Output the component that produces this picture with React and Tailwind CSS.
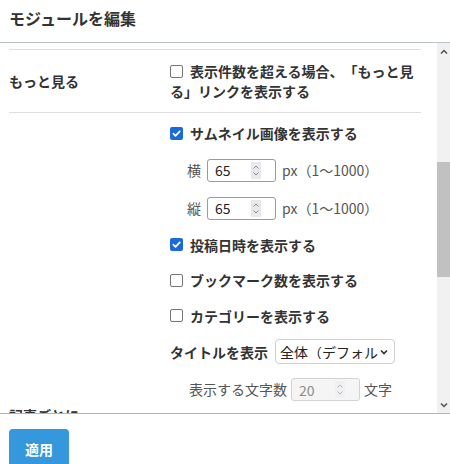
import React from "react";

/* ── small drawn controls ───────────────────────────── */
function Box({ checked }) {
  if (checked) {
    return (
      <span className="inline-flex w-[13px] h-[13px] shrink-0 items-center justify-center rounded-[2px] bg-[#1b6ad8] align-[-1px]">
        <svg width="9" height="9" viewBox="0 0 10 10" fill="none">
          <path d="M1.5 5.2l2.4 2.4L8.6 2.6" stroke="#fff" strokeWidth="1.9" strokeLinecap="round" strokeLinejoin="round" />
        </svg>
      </span>
    );
  }
  return (
    <span className="inline-block w-[13px] h-[13px] shrink-0 rounded-[2px] border border-[#767676] bg-white align-[-1px]" />
  );
}

function Spin({ disabled }) {
  return (
    <span className={`flex w-[10px] h-[17px] flex-col items-center justify-center ${disabled ? "bg-[#f0f0f2]" : "bg-[#e9e9ed]"}`}>
      <svg width="8" height="13" viewBox="0 0 8 13" fill="none" stroke={disabled ? "#b5b5b5" : "#8a8a8a"} strokeWidth="1">
        <path d="M1.5 4.5L4 2l2.5 2.5" />
        <path d="M1.5 8.5L4 11l2.5-2.5" />
      </svg>
    </span>
  );
}

function NumField({ value, disabled }) {
  return (
    <div
      className={`flex h-[23px] w-[69px] items-center justify-between rounded-[3px] border pl-[7px] pr-[14px] ${
        disabled ? "border-[#d3d3d3] bg-[#f5f5f5] text-[#8c8c8c]" : "border-[#9a9a9a] bg-white text-[#222]"
      }`}
    >
      <span className="text-[14px] leading-none">{value}</span>
      <Spin disabled={disabled} />
    </div>
  );
}

function Check({ checked, children }) {
  return (
    <div className="flex items-center gap-[7px]">
      <Box checked={checked} />
      <span className="text-[14px] font-semibold leading-[20px] text-[#333]">{children}</span>
    </div>
  );
}

export default function App() {
  return (
    <div
      className="flex h-[464px] w-[450px] flex-col overflow-hidden bg-white text-[#333] [text-spacing-trim:space-all]"
      style={{ fontFamily: '"Noto Sans CJK JP", "Noto Sans", sans-serif' }}
    >
      {/* header */}
      <div className="flex h-[43px] shrink-0 items-center border-b border-[#bcc3c8] px-[9px] pb-[6px]">
        <h1 className="text-[16px] font-bold leading-none text-[#333]">モジュールを編集</h1>
      </div>

      {/* scroll body */}
      <div className="flex h-[371px] shrink-0 border-b border-[#b4b4b4]">
        <div className="flex-1 overflow-hidden pl-[9px] pr-[16px] pt-[6px]">
          {/* もっと見る */}
          <div className="flex border-y border-[#dedede] py-[11px]">
            <div className="flex w-[161px] shrink-0 items-center text-[14px] font-semibold leading-[20px]">もっと見る</div>
            <p className="flex-1 text-[14px] font-semibold leading-[20px] text-[#333]">
              <span className="mr-[7px] inline-block">
                <Box />
              </span>
              表示件数を超える場合、「もっと見る」リンクを表示する
            </p>
          </div>

          {/* 記事ごとに */}
          <div className="flex">
            <div className="w-[161px] shrink-0 pt-[292px] text-[14px] font-semibold leading-[20px]">記事ごとに</div>
            <div className="flex flex-1 flex-col pt-[2px]">
              <div className="flex h-[36px] items-center">
                <Check checked>サムネイル画像を表示する</Check>
              </div>
              <div className="flex h-[38px] items-center gap-[6px] pl-[17px] text-[14px] text-[#555]">
                <span>横</span>
                <NumField value="65" />
                <span>px（1〜1000）</span>
              </div>
              <div className="flex h-[38px] items-center gap-[6px] pl-[17px] text-[14px] text-[#555]">
                <span>縦</span>
                <NumField value="65" />
                <span>px（1〜1000）</span>
              </div>
              <div className="flex h-[35px] items-center">
                <Check checked>投稿日時を表示する</Check>
              </div>
              <div className="flex h-[36px] items-center">
                <Check>ブックマーク数を表示する</Check>
              </div>
              <div className="flex h-[35px] items-center">
                <Check>カテゴリーを表示する</Check>
              </div>
              <div className="flex h-[37px] items-center gap-[7px]">
                <span className="text-[14px] font-semibold leading-[20px]">タイトルを表示</span>
                <div className="flex h-[25px] w-[120px] items-center justify-between overflow-hidden rounded-[4px] border border-[#cfcfcf] pl-[4px] pr-[5px]">
                  <span className="overflow-hidden whitespace-nowrap text-[14px] leading-none text-[#222]">全体（デフォル</span>
                  <svg width="10" height="10" viewBox="0 0 10 10" fill="none" stroke="#333" strokeWidth="1.6" className="shrink-0">
                    <path d="M2 3.5l3 3 3-3" />
                  </svg>
                </div>
              </div>
              <div className="flex h-[39px] items-center gap-[4px] pl-[19px] text-[14px] text-[#555]">
                <span>表示する文字数</span>
                <NumField value="20" disabled />
                <span>文字</span>
              </div>
            </div>
          </div>
        </div>

        {/* scrollbar */}
        <div className="flex w-[13px] shrink-0 flex-col bg-[#f1f1f1]">
          <div className="flex h-[17px] items-center justify-center">
            <svg width="8" height="6" viewBox="0 0 8 6" fill="none" stroke="#505050" strokeWidth="1.5">
              <path d="M1 4.5l3-3 3 3" />
            </svg>
          </div>
          <div className="h-[102px]" />
          <div className="h-[115px] bg-[#c1c1c1]" />
          <div className="flex-1" />
          <div className="flex h-[17px] items-center justify-center">
            <svg width="8" height="6" viewBox="0 0 8 6" fill="none" stroke="#505050" strokeWidth="1.5">
              <path d="M1 1.5l3 3 3-3" />
            </svg>
          </div>
        </div>
      </div>

      {/* footer */}
      <div className="flex-1 px-[9px] pt-[15px]">
        <button className="flex h-[40px] w-[60px] items-center justify-center rounded-[4px] bg-[#3597dc] text-[14px] font-bold text-white">
          適用
        </button>
      </div>
    </div>
  );
}
